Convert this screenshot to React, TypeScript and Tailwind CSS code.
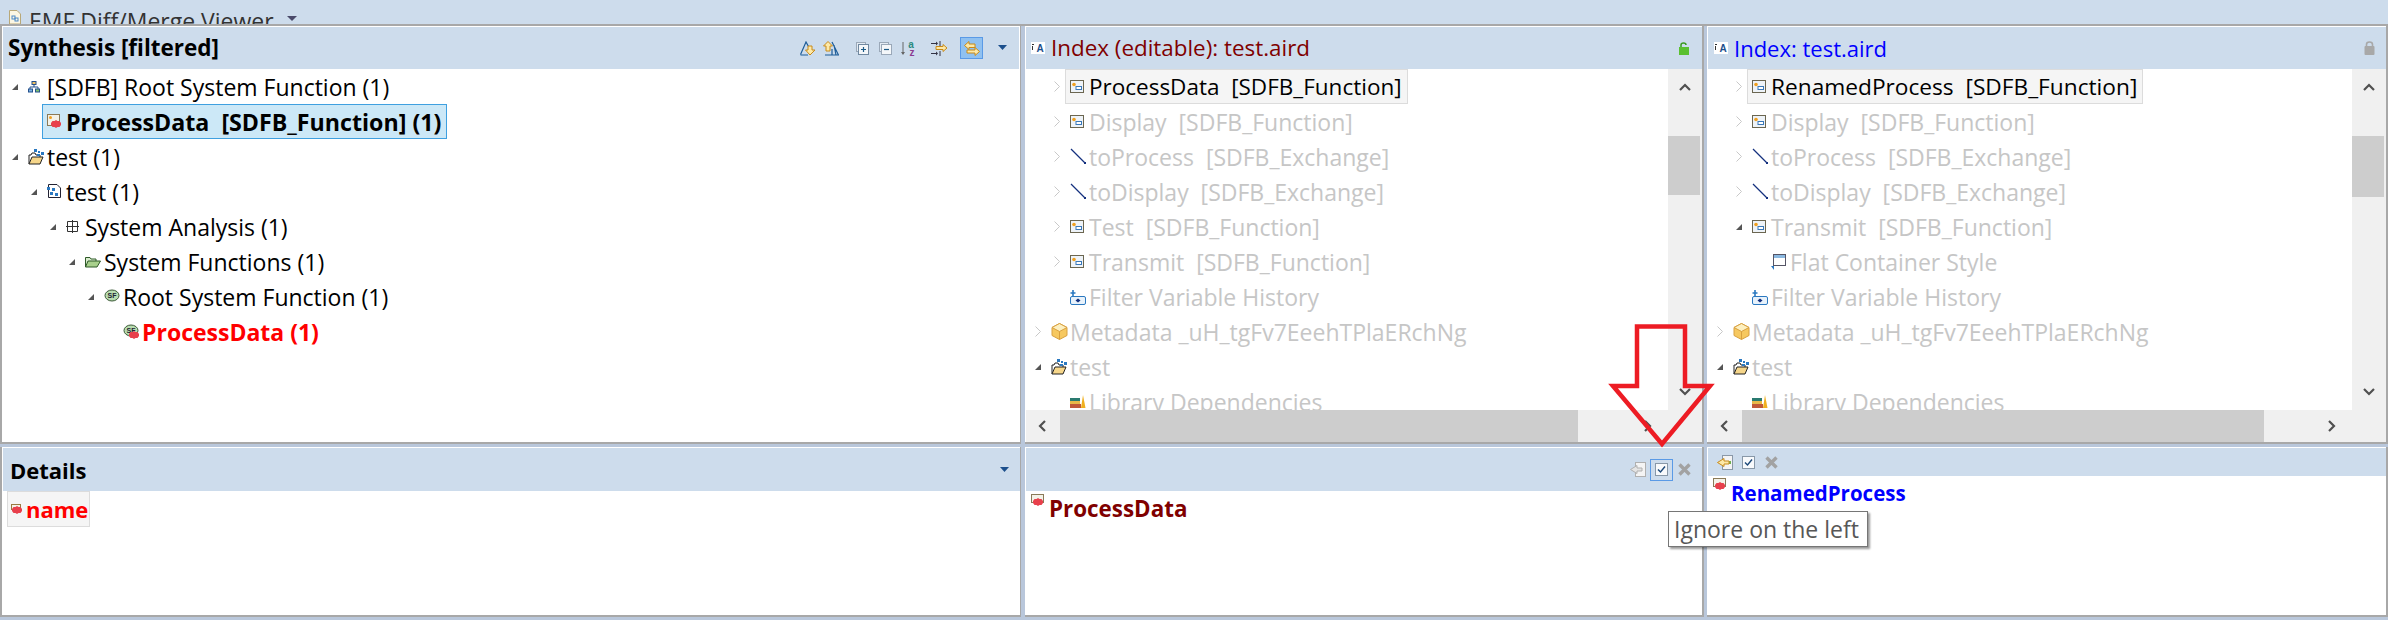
import type { ReactNode } from "react";

const font = "font-['Open_Sans','Liberation_Sans',sans-serif]";

function Expanded() {
  return (
    <svg width="6" height="6" viewBox="0 0 6 6" className="mt-[1px]">
      <path d="M6 0V6H0Z" fill="#555" />
    </svg>
  );
}

function Collapsed() {
  return (
    <svg width="6" height="11" viewBox="0 0 6 11">
      <path d="M0.5 0.5L5.5 5.5L0.5 10.5" fill="none" stroke="#c8c8c8" />
    </svg>
  );
}

function FnIcon() {
  return (
    <svg width="14" height="13" viewBox="0 0 14 13">
      <rect x="0.5" y="0.5" width="13" height="12" fill="#eef3f8" stroke="#6b6650" />
      <circle cx="4" cy="4.5" r="1.8" fill="#f0a020" />
      <rect x="6" y="6.5" width="5.5" height="3" fill="#fff" stroke="#3a78b8" />
    </svg>
  );
}

function EdgeIcon() {
  return (
    <svg width="17" height="17" viewBox="0 0 17 17">
      <path d="M1 1L15 15" stroke="#14307e" strokeWidth="1.2" />
      <rect x="14" y="14" width="2" height="2" fill="#14307e" />
    </svg>
  );
}

function RedBug({ x = 8, y = 8 }: { x?: number; y?: number }) {
  return <path d={`M${x} ${y - 4}l1.5 1h2l1.5 2v2l-1.5 2h-2l-1.5 1-1.5-1h-2l-1.5-2v-2l1.5-2h2Z`} fill="#e8404c" />;
}

function ChangedFnIcon() {
  return (
    <svg width="15" height="15" viewBox="0 0 15 15">
      <rect x="0.5" y="0.5" width="12" height="11" fill="#f4f2e8" stroke="#8a7a58" />
      <circle cx="3.5" cy="3.5" r="1.5" fill="#f0a020" />
      <RedBug x={9} y={10} />
    </svg>
  );
}

function HierarchyIcon() {
  return (
    <svg width="12" height="12" viewBox="0 0 12 12">
      <rect x="4" y="0.5" width="4" height="3" fill="#f0c060" stroke="#24508c" />
      <path d="M6 4V6M2 8V6H10V8" fill="none" stroke="#24508c" />
      <rect x="0.5" y="8" width="4" height="3" fill="#7ab0e0" stroke="#24508c" />
      <rect x="7.5" y="8" width="4" height="3" fill="#80c070" stroke="#24508c" />
    </svg>
  );
}

function FolderIcon({ project = false }: { project?: boolean }) {
  return (
    <svg width="16" height="16" viewBox="0 0 16 16">
      <path d="M1 15V6H3L4 4H7L8 6H12V8" fill="#fff" stroke="#222" />
      <path d="M1 15L4 8H15L12 15Z" fill="#f6d68a" stroke="#222" />
      {project && (
        <g fill="#2a78c0">
          <rect x="6" y="0" width="3" height="3" />
          <rect x="10" y="2" width="2" height="2" />
          <rect x="13" y="3" width="3" height="3" />
          <rect x="9" y="5" width="3" height="2" />
        </g>
      )}
    </svg>
  );
}

function ModelIcon() {
  return (
    <svg width="14" height="15" viewBox="0 0 14 15">
      <path d="M1.5 0.5H10L13.5 4V13.5H1.5Z" fill="#fff" stroke="#223" />
      <g fill="#2a78c0">
        <rect x="0" y="3" width="3" height="3" />
        <rect x="5" y="4" width="3" height="3" />
        <rect x="3" y="8" width="3" height="3" />
        <rect x="8" y="9" width="3" height="3" />
      </g>
    </svg>
  );
}

function GridIcon() {
  return (
    <svg width="13" height="13" viewBox="0 0 13 13">
      <path d="M1.5 1.5H11.5V11.5H1.5ZM1.5 6.5H11.5M6.5 0V13M0 6.5H13" fill="none" stroke="#333" />
    </svg>
  );
}

function GreenFolderIcon() {
  return (
    <svg width="16" height="12" viewBox="0 0 16 12">
      <path d="M0.5 11V1.5H5L6 3H11V5" fill="#d8eccc" stroke="#2f5a28" />
      <path d="M0.5 11L3 5H15.5L12 11Z" fill="#a8d08c" stroke="#2f5a28" />
    </svg>
  );
}

function SfIcon({ changed = false }: { changed?: boolean }) {
  return (
    <svg width="17" height="16" viewBox="0 0 17 16">
      <ellipse cx="8" cy="6.5" rx="7" ry="5.5" fill="#b8dcb0" stroke="#3c5a38" />
      <text x="8" y="9" textAnchor="middle" fontSize="7" fontWeight="700" fill="#223" fontFamily="Liberation Sans">
        SF
      </text>
      {changed && <RedBug x={11} y={11} />}
    </svg>
  );
}

function FilterIcon() {
  return (
    <svg width="16" height="16" viewBox="0 0 16 16">
      <path d="M2 7.5H14Q15.5 7.5 15.5 9V14Q15.5 15.5 14 15.5H2Q0.5 15.5 0.5 14V9Q0.5 7.5 2 7.5Z" fill="#e8f2fb" stroke="#2a78c0" />
      <path d="M3 1V7M0.5 4H5.5" stroke="#2a78c0" strokeWidth="1.6" />
      <path d="M8 9.5L10.5 11.5L8 13.5L5.5 11.5Z" fill="#14307e" />
    </svg>
  );
}

function CubeIcon() {
  return (
    <svg width="17" height="17" viewBox="0 0 17 17">
      <path d="M8.5 0.5L16 4.5V12.5L8.5 16.5L1 12.5V4.5Z" fill="#f6c860" stroke="#d8a040" />
      <path d="M1 4.5L8.5 8.5L16 4.5L8.5 0.5Z" fill="#fdf0c0" stroke="#d8a040" />
      <path d="M8.5 8.5V16.5" stroke="#d8a040" />
    </svg>
  );
}

function LibraryIcon() {
  return (
    <svg width="16" height="13" viewBox="0 0 16 13">
      <rect x="0" y="3" width="10" height="3" fill="#2a7a70" />
      <rect x="0" y="6" width="10" height="3" fill="#e8b848" />
      <rect x="0" y="9" width="11" height="4" fill="#c05838" />
      <path d="M11 13L13 0L15.5 13Z" fill="#f0b020" />
    </svg>
  );
}

function StyleIcon() {
  return (
    <svg width="15" height="16" viewBox="0 0 15 16">
      <rect x="2.5" y="0.5" width="12" height="11" fill="#fff" stroke="#556" />
      <rect x="3" y="1" width="11" height="3" fill="#8ab8e0" />
      <path d="M0 12H3V16Z" fill="#2a78c0" />
    </svg>
  );
}

function IndexIcon() {
  return (
    <svg width="14" height="12" viewBox="0 0 14 12">
      <rect width="14" height="12" fill="#fff" />
      <rect x="1" y="2" width="2" height="1" fill="#333" />
      <rect x="1" y="4" width="1" height="4" fill="#333" />
      <text x="9" y="10" textAnchor="middle" fontSize="10" fontWeight="700" fill="#1c4f8c" fontFamily="Liberation Sans">
        A
      </text>
    </svg>
  );
}

function MenuChevron() {
  return (
    <svg width="9" height="6" viewBox="0 0 9 6">
      <path d="M0 0H9L4.5 5Z" fill="#1c4f8c" />
    </svg>
  );
}

function OrangeArrow({ d }: { d: string }) {
  return <path d={d} fill="#fde9a8" stroke="#c88a18" />;
}

function SyncDown() {
  return (
    <svg width="16" height="15" viewBox="0 0 16 15">
      <path d="M0.5 13.5L6 1L11 10M0.5 14H8" fill="none" stroke="#1c5c98" strokeWidth="1.2" />
      <OrangeArrow d="M8 5H12V9H15L10 14L5.5 9H8Z" />
    </svg>
  );
}

function SyncUp() {
  return (
    <svg width="16" height="15" viewBox="0 0 16 15">
      <path d="M9 1L15.5 14H2M11 4L13 14M9 8L9 14" fill="none" stroke="#1c5c98" strokeWidth="1.2" />
      <OrangeArrow d="M5 0.5L9.5 5H7V10H3V5H0.5Z" />
    </svg>
  );
}

function ExpandCollapse({ plus }: { plus: boolean }) {
  return (
    <svg width="13" height="13" viewBox="0 0 13 13">
      <rect x="0.5" y="0.5" width="9" height="9" fill="#e4ecf4" stroke="#9aa8b8" />
      <rect x="2.5" y="2.5" width="10" height="10" fill="#f4f7fa" stroke={plus ? "#7088a0" : "#9aa8b8"} />
      <path d={plus ? "M5 7.5H10M7.5 5V10" : "M5 7.5H10"} stroke="#1c5c88" strokeWidth="1.2" />
    </svg>
  );
}

function SortIcon() {
  return (
    <svg width="15" height="16" viewBox="0 0 15 16">
      <path d="M2 2V14" stroke="#666" />
      <path d="M0 12H4L2 15Z" fill="#666" />
      <text x="10" y="7.5" textAnchor="middle" fontSize="10" fontWeight="700" fill="#2a8a80" fontFamily="Liberation Sans">
        a
      </text>
      <text x="11" y="16" textAnchor="middle" fontSize="10" fontWeight="700" fill="#8a3a90" fontFamily="Liberation Sans">
        z
      </text>
    </svg>
  );
}

function FilterArrows() {
  return (
    <svg width="17" height="15" viewBox="0 0 17 15">
      <path d="M0 2.5H6M0 12.5H6" stroke="#334" />
      <path d="M5 0.5L7 2.5L5 4.5ZM5 10.5L7 12.5L5 14.5Z" fill="#334" />
      <path d="M9 0V5M9 10V15" stroke="#334" />
      <OrangeArrow d="M5 5.5H12V3.5L16 7L12 10.5V8.5H5Z" />
    </svg>
  );
}

function SwapArrows() {
  return (
    <svg width="16" height="15" viewBox="0 0 16 15">
      <OrangeArrow d="M5 0.5V3H11V6.5H5V8.5L0.5 4.5Z" />
      <OrangeArrow d="M11 6.5V9H3V12H11V14.5L15.5 10.5Z" />
    </svg>
  );
}

function GreenLock() {
  return (
    <svg width="11" height="13" viewBox="0 0 11 13">
      <path d="M2 6V3Q2 1 4.5 1T7 3" fill="none" stroke="#3a9a20" strokeWidth="1.5" />
      <rect x="0" y="5" width="10" height="8" fill="#5ac030" />
    </svg>
  );
}

function GrayLock() {
  return (
    <svg width="11" height="14" viewBox="0 0 11 14">
      <path d="M2.5 6V3.5Q2.5 1 5.5 1T8.5 3.5V6" fill="none" stroke="#a8a8a8" strokeWidth="1.6" />
      <rect x="0.5" y="5" width="10" height="9" rx="1" fill="#a8a8a8" />
    </svg>
  );
}

function MergeDoc({ on = false }: { on?: boolean }) {
  const stroke = on ? "#c88a18" : "#b0b0b0";
  return (
    <svg width="16" height="15" viewBox="0 0 16 15">
      <rect x="5.5" y="0.5" width="10" height="14" fill="#f4f4f4" stroke={on ? "#8a98a8" : "#b0b0b0"} />
      {on && <rect x="11" y="6" width="3" height="3" fill="#70b050" />}
      <path d="M7 3.5V6H12V9H7V11.5L0.5 7.5Z" fill={on ? "#fde9a8" : "#e4e4e4"} stroke={stroke} />
    </svg>
  );
}

function CheckIcon() {
  return (
    <svg width="13" height="13" viewBox="0 0 13 13">
      <rect x="0.5" y="0.5" width="12" height="12" fill="#f8fafc" stroke="#8898a8" />
      <path d="M3 6.5L5.5 9L10 3.5" fill="none" stroke="#1c4878" strokeWidth="1.4" />
    </svg>
  );
}

function CrossIcon() {
  return (
    <svg width="13" height="13" viewBox="0 0 13 13">
      <path d="M1.5 1.5L11.5 11.5M11.5 1.5L1.5 11.5" stroke="#a2a2a2" strokeWidth="3.4" />
    </svg>
  );
}

function ScrollChevron({ dir }: { dir: "up" | "down" | "left" | "right" }) {
  const d = {
    up: "M1 8L6 3L11 8",
    down: "M1 3L6 8L11 3",
    left: "M8 1L3 6L8 11",
    right: "M3 1L8 6L3 11",
  }[dir];
  return (
    <svg width="12" height="12" viewBox="0 0 12 12">
      <path d={d} fill="none" stroke="#505050" strokeWidth="2.2" />
    </svg>
  );
}

type RowProps = {
  pl: string;
  twist?: ReactNode;
  icon: ReactNode;
  text: string;
  label?: string;
  text2?: string;
};

function Row({ pl, twist, icon, text, label = "border-transparent", text2 = "text-[#c6c6c6]" }: RowProps) {
  return (
    <div className={`flex h-[35px] shrink-0 items-center whitespace-pre ${pl}`}>
      <div className="flex w-[11px] items-center justify-start">{twist}</div>
      <div className={`flex h-[35px] items-center border pl-[4px] pr-[5px] ${label}`}>
        <div className="flex w-[19px] items-center">{icon}</div>
        <span className={text2}>{text}</span>
      </div>
    </div>
  );
}

function VScroll({ thumb }: { thumb: string }) {
  return (
    <div className="flex w-[34px] shrink-0 flex-col bg-[#f0f0f0]">
      <div className="flex h-[38px] items-center justify-center">
        <ScrollChevron dir="up" />
      </div>
      <div className="h-[29px]" />
      <div className={`mr-[2px] bg-[#cdcdcd] ${thumb}`} />
      <div className="flex-1" />
      <div className="flex h-[36px] items-center justify-center">
        <ScrollChevron dir="down" />
      </div>
    </div>
  );
}

function HScroll({ thumb }: { thumb: string }) {
  return (
    <div className="flex h-[32px] shrink-0 bg-[#f0f0f0]">
      <div className="flex w-[34px] items-center justify-center">
        <ScrollChevron dir="left" />
      </div>
      <div className={`bg-[#cdcdcd] ${thumb}`} />
      <div className="flex-1" />
      <div className="flex w-[68px] items-center justify-start pl-[8px]">
        <ScrollChevron dir="right" />
      </div>
    </div>
  );
}

const twistOpen = <Expanded />;
const twistClosed = <Collapsed />;

export default function App() {
  return (
    <div className={`relative flex h-[620px] w-[2388px] flex-col overflow-hidden bg-[#b9c7db] text-[23px] leading-[28px] text-black ${font}`}>
      {/* view title, cut off by the pane below */}
      <div className="flex h-[24px] shrink-0 items-start overflow-hidden bg-[#cddcec] pl-[9px] pt-[10px]">
        <svg width="12" height="14" viewBox="0 0 12 14" className="shrink-0">
          <path d="M0.5 0.5H8L11.5 4V14H0.5Z" fill="#fbf6e4" stroke="#b8a878" />
          <rect x="3" y="6" width="3" height="3" fill="none" stroke="#4a88c8" />
          <rect x="6" y="8" width="3" height="3" fill="none" stroke="#4a88c8" />
        </svg>
        <span className="ml-[8px] leading-[22px] text-[#333]">EMF Diff/Merge Viewer</span>
        <svg width="10" height="5" viewBox="0 0 10 5" className="ml-[13px] mt-[6px] shrink-0">
          <path d="M0 0H10L5 5Z" fill="#4a4a6a" />
        </svg>
      </div>

      {/* top row */}
      <div className="flex h-[420px] shrink-0">
        <div className="flex w-[1021px] shrink-0 flex-col border-x border-t-2 border-b-2 border-[#a8a8a8] border-l-2 bg-white p-px pr-[1px]">
          <div className="flex h-[42px] shrink-0 items-center bg-[#cddcec] pl-[5px] pr-[12px]">
            <span className="text-[22.5px] font-bold">Synthesis [filtered]</span>
            <div className="flex-1" />
            <div className="flex items-center">
              <SyncDown />
              <div className="w-[7px]" />
              <SyncUp />
              <div className="w-[17px]" />
              <ExpandCollapse plus />
              <div className="w-[10px]" />
              <ExpandCollapse plus={false} />
              <div className="w-[9px]" />
              <SortIcon />
              <div className="w-[15px]" />
              <FilterArrows />
              <div className="w-[12px]" />
              <div className="flex h-[22px] w-[23px] items-center justify-center border border-[#5a9ae6] bg-[#90c1f0]">
                <SwapArrows />
              </div>
              <div className="w-[15px]" />
              <MenuChevron />
            </div>
          </div>
          <div className="flex flex-col overflow-hidden">
            <Row pl="pl-[9px]" twist={twistOpen} icon={<HierarchyIcon />} text="[SDFB] Root System Function (1)" text2="text-black" />
            <Row pl="pl-[28px]" icon={<ChangedFnIcon />} text="ProcessData  [SDFB_Function] (1)" label="w-fit border-[#3fa0e0] bg-[#cce8f7]" text2="text-[23.2px] font-bold text-black" />
            <Row pl="pl-[9px]" twist={twistOpen} icon={<FolderIcon project />} text="test (1)" text2="text-black" />
            <Row pl="pl-[28px]" twist={twistOpen} icon={<ModelIcon />} text="test (1)" text2="text-black" />
            <Row pl="pl-[47px]" twist={twistOpen} icon={<GridIcon />} text="System Analysis (1)" text2="text-black" />
            <Row pl="pl-[66px]" twist={twistOpen} icon={<GreenFolderIcon />} text="System Functions (1)" text2="text-black" />
            <Row pl="pl-[85px]" twist={twistOpen} icon={<SfIcon />} text="Root System Function (1)" text2="text-black" />
            <Row pl="pl-[104px]" icon={<SfIcon changed />} text="ProcessData (1)" text2="font-bold text-[#ff0000]" />
          </div>
        </div>

        <div className="w-[4px] shrink-0 border-t-2 border-[#a8a8a8]" />

        <div className="flex w-[679px] shrink-0 flex-col border-b-2 border-r-2 border-t-2 border-[#a8a8a8] bg-white pl-px pt-px">
          <div className="flex h-[42px] shrink-0 items-center bg-[#cddcec] pl-[5px] pr-[12px]">
            <IndexIcon />
            <span className="ml-[6px] text-[22.4px] text-[#800000]">Index (editable): test.aird</span>
            <div className="flex-1" />
            <GreenLock />
          </div>
          <div className="flex min-h-0 flex-1">
            <div className="flex min-w-0 flex-1 flex-col overflow-hidden">
              <Row pl="pl-[28px]" twist={twistClosed} icon={<FnIcon />} text="ProcessData  [SDFB_Function]" label="w-fit border-[#dcdcdc] bg-[#f5f5f5]" text2="text-[22.5px] text-black" />
              <Row pl="pl-[28px]" twist={twistClosed} icon={<FnIcon />} text="Display  [SDFB_Function]" />
              <Row pl="pl-[28px]" twist={twistClosed} icon={<EdgeIcon />} text="toProcess  [SDFB_Exchange]" />
              <Row pl="pl-[28px]" twist={twistClosed} icon={<EdgeIcon />} text="toDisplay  [SDFB_Exchange]" />
              <Row pl="pl-[28px]" twist={twistClosed} icon={<FnIcon />} text="Test  [SDFB_Function]" />
              <Row pl="pl-[28px]" twist={twistClosed} icon={<FnIcon />} text="Transmit  [SDFB_Function]" />
              <Row pl="pl-[28px]" icon={<FilterIcon />} text="Filter Variable History" />
              <Row pl="pl-[9px]" twist={twistClosed} icon={<CubeIcon />} text="Metadata _uH_tgFv7EeehTPlaERchNg" />
              <Row pl="pl-[9px]" twist={twistOpen} icon={<FolderIcon project />} text="test" />
              <Row pl="pl-[28px]" icon={<LibraryIcon />} text="Library Dependencies" />
            </div>
            <VScroll thumb="h-[59px]" />
          </div>
          <HScroll thumb="w-[518px]" />
        </div>

        <div className="w-[3px] shrink-0 border-t-2 border-[#a8a8a8]" />

        <div className="flex w-[681px] shrink-0 flex-col border-b-2 border-r-2 border-t-2 border-[#a8a8a8] bg-white pl-px pt-px">
          <div className="flex h-[42px] shrink-0 items-center bg-[#cddcec] pl-[6px] pr-[11px]">
            <IndexIcon />
            <span className="ml-[6px] text-[22px] text-[#0000ff]">Index: test.aird</span>
            <div className="flex-1" />
            <GrayLock />
          </div>
          <div className="flex min-h-0 flex-1">
            <div className="flex min-w-0 flex-1 flex-col overflow-hidden">
              <Row pl="pl-[28px]" twist={twistClosed} icon={<FnIcon />} text="RenamedProcess  [SDFB_Function]" label="w-fit border-[#dcdcdc] bg-[#f5f5f5]" text2="text-[22.7px] text-black" />
              <Row pl="pl-[28px]" twist={twistClosed} icon={<FnIcon />} text="Display  [SDFB_Function]" />
              <Row pl="pl-[28px]" twist={twistClosed} icon={<EdgeIcon />} text="toProcess  [SDFB_Exchange]" />
              <Row pl="pl-[28px]" twist={twistClosed} icon={<EdgeIcon />} text="toDisplay  [SDFB_Exchange]" />
              <Row pl="pl-[28px]" twist={twistOpen} icon={<FnIcon />} text="Transmit  [SDFB_Function]" />
              <Row pl="pl-[47px]" icon={<StyleIcon />} text="Flat Container Style" />
              <Row pl="pl-[28px]" icon={<FilterIcon />} text="Filter Variable History" />
              <Row pl="pl-[9px]" twist={twistClosed} icon={<CubeIcon />} text="Metadata _uH_tgFv7EeehTPlaERchNg" />
              <Row pl="pl-[9px]" twist={twistOpen} icon={<FolderIcon project />} text="test" />
              <Row pl="pl-[28px]" icon={<LibraryIcon />} text="Library Dependencies" />
            </div>
            <VScroll thumb="h-[61px]" />
          </div>
          <HScroll thumb="w-[522px]" />
        </div>
      </div>

      <div className="h-[3px] shrink-0" />

      {/* bottom row */}
      <div className="flex h-[170px] shrink-0">
        <div className="flex w-[1021px] shrink-0 flex-col border-b-2 border-l-2 border-r border-[#a8a8a8] bg-white pl-px pt-px">
          <div className="flex h-[43px] shrink-0 items-center bg-[#cddcec] pl-[7px] pr-[11px]">
            <span className="text-[22px] font-bold">Details</span>
            <div className="flex-1" />
            <MenuChevron />
          </div>
          <div className="ml-[4px] flex h-[36px] w-[83px] items-center border border-[#dcdcdc] bg-[#f5f5f5] pl-[3px]">
            <svg width="12" height="11" viewBox="0 0 12 11" className="shrink-0">
              <rect x="0.5" y="0.5" width="9" height="5" fill="#f4f2e8" stroke="#9a7a40" />
              <RedBug x={6} y={6} />
            </svg>
            <span className="ml-[3px] text-[22px] font-bold text-[#ff0000]">name</span>
          </div>
        </div>

        <div className="w-[4px] shrink-0" />

        <div className="flex w-[679px] shrink-0 flex-col border-b-2 border-r-2 border-[#a8a8a8] bg-white pl-px pt-px">
          <div className="flex h-[43px] shrink-0 items-center bg-[#cddcec] pr-[11px]">
            <div className="flex-1" />
            <MergeDoc />
            <div className="ml-[4px] flex h-[22px] w-[23px] items-center justify-center border border-[#5a9ae6] bg-[#cddcec]">
              <CheckIcon />
            </div>
            <div className="ml-[5px]">
              <CrossIcon />
            </div>
          </div>
          <div className="flex items-start pl-[5px] pt-[3px]">
            <svg width="14" height="13" viewBox="0 0 14 13" className="shrink-0">
              <rect x="0.5" y="0.5" width="12" height="8" fill="#f4f2e8" stroke="#8a7a58" />
              <RedBug x={7} y={8} />
            </svg>
            <span className="ml-[4px] mt-[1px] text-[22.4px] font-bold text-[#800000]">ProcessData</span>
          </div>
        </div>

        <div className="w-[3px] shrink-0" />

        <div className="flex w-[681px] shrink-0 flex-col border-b-2 border-r-2 border-[#a8a8a8] bg-white pl-px pt-px">
          <div className="flex h-[28px] shrink-0 items-center bg-[#cddcec] pl-[9px]">
            <MergeDoc on />
            <div className="ml-[9px]">
              <CheckIcon />
            </div>
            <div className="ml-[10px]">
              <CrossIcon />
            </div>
          </div>
          <div className="flex items-start pl-[5px] pt-[2px]">
            <svg width="14" height="13" viewBox="0 0 14 13" className="shrink-0">
              <rect x="0.5" y="0.5" width="12" height="8" fill="#f4f2e8" stroke="#8a7a58" />
              <RedBug x={7} y={8} />
            </svg>
            <span className="ml-[4px] mt-[1px] text-[20.5px] font-bold text-[#0000ff]">RenamedProcess</span>
          </div>
        </div>
      </div>

      {/* hover tooltip on the ignore button */}
      <div className="absolute left-[1668px] top-[511px] flex h-[36px] w-[200px] items-center border border-[#767676] bg-white pl-[5px] text-[#575757] shadow-[2px_2px_2px_rgba(0,0,0,0.4)]">
        Ignore on the left
      </div>

      {/* red annotation arrow */}
      <svg width="110" height="130" viewBox="0 0 110 130" className="absolute left-[1607px] top-[320px]">
        <path d="M30 6.5H78V66H103L55 124L6 66H30Z" fill="none" stroke="#ed1c24" strokeWidth="4.5" />
      </svg>
    </div>
  );
}
